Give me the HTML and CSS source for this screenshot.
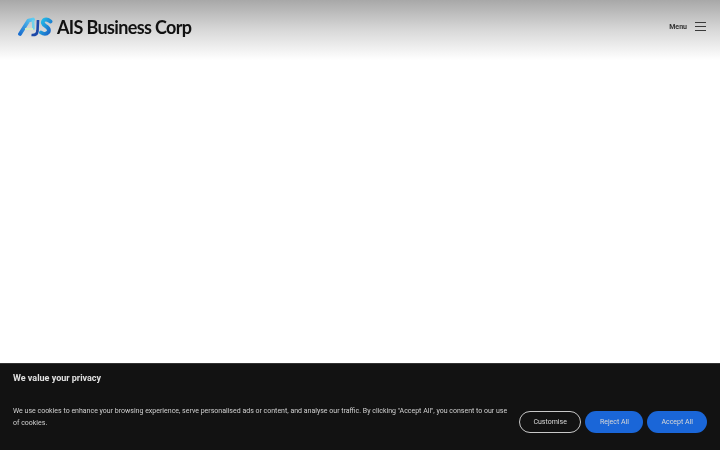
FILE: index.html
```html
<!DOCTYPE html>
<html lang="en">
<head>
    <meta charset="UTF-8">
    <meta name="viewport" content="width=device-width, initial-scale=1.0">
    <title>AIS Business Corp</title>
    <link rel="stylesheet" href="styles.css">
</head>
<body>
    <header class="site-header">
        <a class="logo" href="#">
            <svg class="logo-mark" width="35" height="20" viewBox="0 0 35 20">
                <defs>
                    <linearGradient id="markA" x1="0" y1="1" x2="1" y2="0">
                        <stop offset="0" stop-color="#1a6fd0"/>
                        <stop offset="1" stop-color="#5ccbf2"/>
                    </linearGradient>
                    <linearGradient id="markS" x1="0" y1="0" x2="1" y2="1">
                        <stop offset="0" stop-color="#22c0ea"/>
                        <stop offset="1" stop-color="#1a5fc4"/>
                    </linearGradient>
                </defs>
                <path d="M2 17 L10.500 3.500 L15 2.500" fill="none" stroke="url(#markA)" stroke-width="3.800" stroke-linecap="round" stroke-linejoin="round"/>
                <path d="M15 3 L15.500 12.500" stroke="#6fd2ea" stroke-width="2.600"/>
                <path d="M7 12 H15" stroke="#d8eec0" stroke-width="1.800"/>
                <path d="M20 3 L19.500 14 Q19 18.500 13.500 18" fill="none" stroke="#1c48a8" stroke-width="2.600"/>
                <path d="M32.500 4.500 Q29 1.500 26 3 Q23 6 27.500 9 Q32 11.500 30.500 15 Q27.500 18.500 23 15.500" fill="none" stroke="url(#markS)" stroke-width="3.800" stroke-linecap="round"/>
            </svg>
            <span class="logo-text">AIS Business Corp</span>
        </a>
        <button class="menu-toggle">
            <span class="soft">Menu</span>
            <span class="menu-icon"><i></i><i></i><i></i></span>
        </button>
    </header>
    <main class="content"></main>
    <section class="cookie-bar">
        <h2 class="soft">We value your privacy</h2>
        <div class="cookie-row">
            <p class="soft">We use cookies to enhance your browsing experience, serve personalised ads or content, and analyse our traffic. By clicking "Accept All", you consent to our use of cookies.</p>
            <div class="cookie-buttons">
                <button class="btn btn-outline">Customise</button>
                <button class="btn btn-blue btn-reject">Reject All</button>
                <button class="btn btn-blue">Accept All</button>
            </div>
        </div>
    </section>
</body>
</html>
```

FILE: styles.css
```css
body {
    margin: 0;
    display: flex;
    flex-direction: column;
    height: 450px;
    overflow: hidden;
    background: #fff;
    font-family: Roboto, "Liberation Sans", sans-serif;
}
.soft {
    filter: blur(0.3px);
}
.site-header {
    height: 60px;
    padding: 0 14px 7px 18px;
    box-sizing: border-box;
    display: flex;
    align-items: center;
    justify-content: space-between;
    background: linear-gradient(to bottom, #a8a8a8, #d8d8d8 50%, #ffffff);
}
.logo {
    display: flex;
    align-items: center;
    gap: 4px;
    color: #111;
    text-decoration: none;
    filter: blur(0.3px);
}
.logo-text {
    font-family: Lato, sans-serif;
    font-size: 18px;
    font-weight: 700;
    letter-spacing: -0.65px;
    white-space: nowrap;
}
.menu-toggle {
    display: flex;
    align-items: center;
    gap: 8px;
    padding: 0;
    border: 0;
    background: none;
    font-family: inherit;
    font-size: 7px;
    font-weight: 700;
    color: #333;
}
.menu-icon {
    display: flex;
    flex-direction: column;
    gap: 2.600px;
    width: 11px;
}
.menu-icon i {
    display: block;
    height: 1px;
    background: #3a3a3a;
}
.content {
    flex: 1;
}
.cookie-bar {
    height: 87px;
    box-sizing: border-box;
    padding: 8px 13px 0;
    background: #121212;
    border-top: 1px solid #333;
    color: #d0d0d0;
}
.cookie-bar h2 {
    margin: 0;
    font-size: 9px;
    line-height: 12px;
    font-weight: 700;
    color: #e0e0e0;
}
.cookie-row {
    display: flex;
    align-items: flex-end;
    gap: 8px;
    margin-top: 21px;
}
.cookie-row p {
    flex: 1;
    margin: 0 0 4px;
    font-size: 7px;
    line-height: 12px;
}
.cookie-buttons {
    display: flex;
    flex-shrink: 0;
    gap: 4px;
}
.btn {
    height: 22px;
    padding: 0 14px;
    border-radius: 11px;
    font-family: inherit;
    font-size: 7px;
    color: #d8d8d8;
    filter: blur(0.2px);
}
.btn-outline {
    padding: 0 13.500px;
    border: 1px solid #c8c8c8;
    background: transparent;
}
.btn-blue {
    border: 0;
    background: #1a66d8;
}
.btn-reject {
    padding: 0 14.500px;
}
```
